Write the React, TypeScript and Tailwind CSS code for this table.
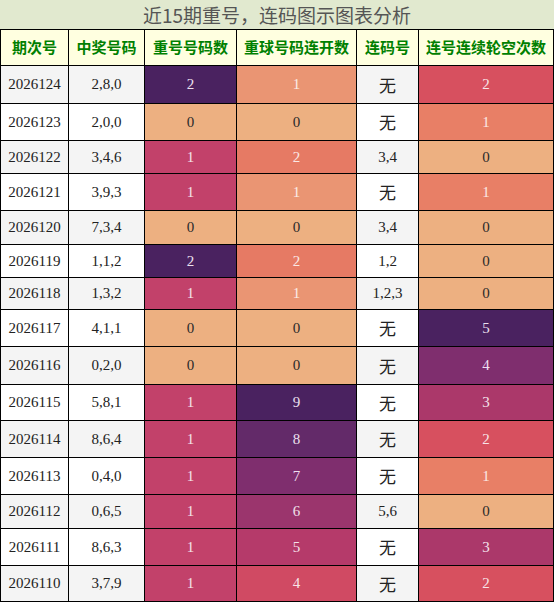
import React from "react";

type Row = {
  id: string;
  nums: string;
  rep: number;
  lian: number;
  code: string;
  kong: number;
  h: string;
};

const rows: Row[] = [
  { id: "2026124", nums: "2,8,0", rep: 2, lian: 1, code: "无", kong: 2, h: "h-[38px]" },
  { id: "2026123", nums: "2,0,0", rep: 0, lian: 0, code: "无", kong: 1, h: "h-[37px]" },
  { id: "2026122", nums: "3,4,6", rep: 1, lian: 2, code: "3,4", kong: 0, h: "h-[33px]" },
  { id: "2026121", nums: "3,9,3", rep: 1, lian: 1, code: "无", kong: 1, h: "h-[37px]" },
  { id: "2026120", nums: "7,3,4", rep: 0, lian: 0, code: "3,4", kong: 0, h: "h-[34px]" },
  { id: "2026119", nums: "1,1,2", rep: 2, lian: 2, code: "1,2", kong: 0, h: "h-[33px]" },
  { id: "2026118", nums: "1,3,2", rep: 1, lian: 1, code: "1,2,3", kong: 0, h: "h-[32px]" },
  { id: "2026117", nums: "4,1,1", rep: 0, lian: 0, code: "无", kong: 5, h: "h-[37px]" },
  { id: "2026116", nums: "0,2,0", rep: 0, lian: 0, code: "无", kong: 4, h: "h-[38px]" },
  { id: "2026115", nums: "5,8,1", rep: 1, lian: 9, code: "无", kong: 3, h: "h-[36px]" },
  { id: "2026114", nums: "8,6,4", rep: 1, lian: 8, code: "无", kong: 2, h: "h-[37px]" },
  { id: "2026113", nums: "0,4,0", rep: 1, lian: 7, code: "无", kong: 1, h: "h-[37px]" },
  { id: "2026112", nums: "0,6,5", rep: 1, lian: 6, code: "5,6", kong: 0, h: "h-[34px]" },
  { id: "2026111", nums: "8,6,3", rep: 1, lian: 5, code: "无", kong: 3, h: "h-[37px]" },
  { id: "2026110", nums: "3,7,9", rep: 1, lian: 4, code: "无", kong: 2, h: "h-[36px]" },
];

const repColor: Record<number, string> = {
  0: "bg-[#edb081] text-[#2a2a2a]",
  1: "bg-[#c2416a] text-[#f3e4e8]",
  2: "bg-[#4a2260] text-[#ece0ee]",
};

const lianColor: Record<number, string> = {
  0: "bg-[#edb081] text-[#2a2a2a]",
  1: "bg-[#ea9573] text-[#fbece6]",
  2: "bg-[#e67a64] text-[#fbe8e4]",
  4: "bg-[#d04a63] text-[#f8e4e8]",
  5: "bg-[#b53a6a] text-[#f4e2ea]",
  6: "bg-[#9b356d] text-[#f0e0ea]",
  7: "bg-[#7f2e6e] text-[#eedff0]",
  8: "bg-[#632a69] text-[#ece0ee]",
  9: "bg-[#4a2260] text-[#ece0ee]",
};

const kongColor: Record<number, string> = {
  0: "bg-[#edb081] text-[#2a2a2a]",
  1: "bg-[#e87f66] text-[#fbe8e4]",
  2: "bg-[#d7505f] text-[#f8e4e8]",
  3: "bg-[#ab386a] text-[#f4e2ea]",
  4: "bg-[#7f2e6e] text-[#eedff0]",
  5: "bg-[#4a2260] text-[#ece0ee]",
};

const cols = "grid grid-cols-[68px_76px_92px_120px_62px_135px]";
const cell = "flex items-center justify-center border-r border-b border-black";

export default function App() {
  const headers = ["期次号", "中奖号码", "重号号码数", "重球号码连开数", "连码号", "连号连续轮空次数"];
  return (
    <div className="w-[554px] h-[602px] bg-white font-['Liberation_Serif','Noto_Sans_CJK_SC',serif] text-[15px]">
      <div className="h-[29px] bg-[#e1e9cf] flex items-center justify-center text-[19px] text-[#555555] font-['Noto_Sans_CJK_SC','Noto_Sans',sans-serif] leading-none">
        近15期重号，连码图示图表分析
      </div>
      <div className="border-l border-t border-black">
        <div className={cols}>
          {headers.map((h) => (
            <div
              key={h}
              className={`${cell} h-[36px] bg-[#ffffe0] text-[#008000] font-bold text-[15px] font-['Noto_Sans_CJK_SC','Noto_Sans',sans-serif]`}
            >
              {h}
            </div>
          ))}
        </div>
        {rows.map((r, i) => {
          const plain = i % 2 === 0 ? "bg-[#f4f4f4]" : "bg-white";
          return (
            <div key={r.id} className={cols}>
              <div className={`${cell} ${r.h} ${plain} text-[#222]`}>{r.id}</div>
              <div className={`${cell} ${r.h} ${plain} text-[#222]`}>{r.nums}</div>
              <div className={`${cell} ${r.h} ${repColor[r.rep]}`}>{r.rep}</div>
              <div className={`${cell} ${r.h} ${lianColor[r.lian]}`}>{r.lian}</div>
              <div
                className={`${cell} ${r.h} ${plain} text-[#222] ${
                  r.code === "无" ? "text-[17px] font-['Noto_Sans_CJK_SC',sans-serif]" : ""
                }`}
              >
                {r.code}
              </div>
              <div className={`${cell} ${r.h} ${kongColor[r.kong]}`}>{r.kong}</div>
            </div>
          );
        })}
      </div>
    </div>
  );
}
